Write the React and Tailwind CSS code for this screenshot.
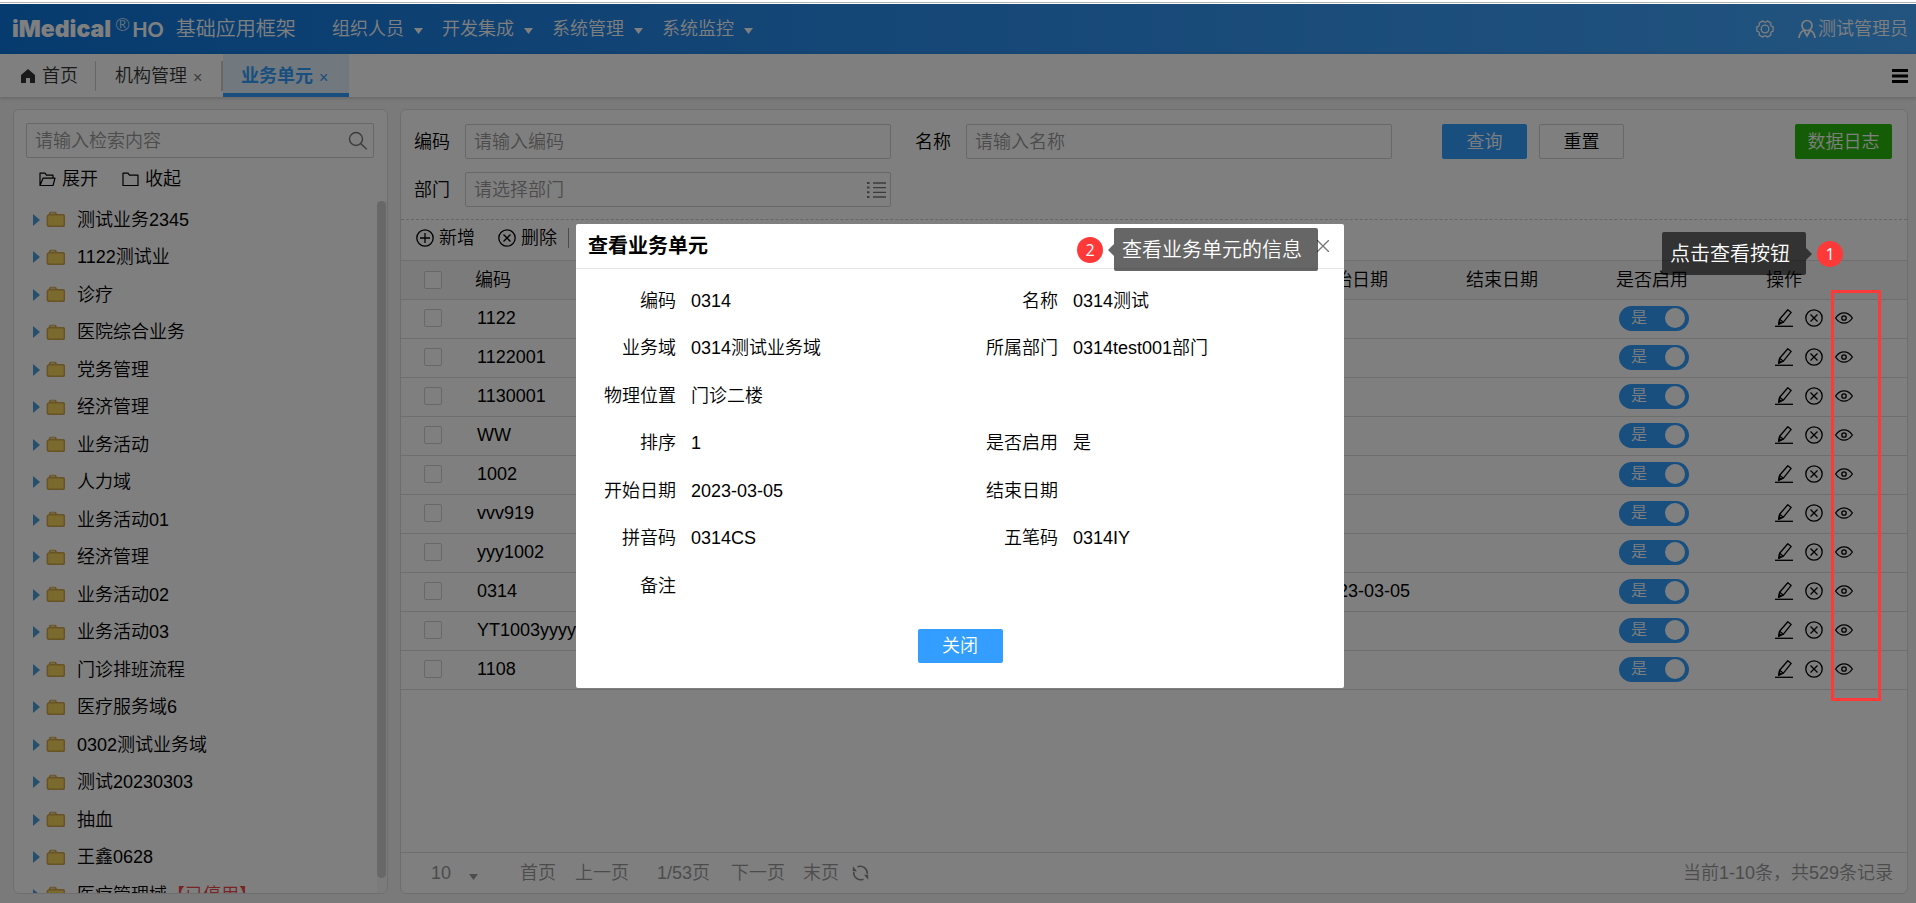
import React from "react";

const font = "font-['Liberation_Sans','Noto_Sans_CJK_SC',sans-serif]";

const navItems = ["组织人员", "开发集成", "系统管理", "系统监控"];

const treeItems = [
  "测试业务2345", "1122测试业", "诊疗", "医院综合业务", "党务管理", "经济管理", "业务活动",
  "人力域", "业务活动01", "经济管理", "业务活动02", "业务活动03", "门诊排班流程", "医疗服务域6",
  "0302测试业务域", "测试20230303", "抽血", "王鑫0628", "医疗管理域",
];

const rows = [
  ["1122", ""], ["1122001", ""], ["1130001", ""], ["WW", ""], ["1002", ""], ["vvv919", ""],
  ["yyy1002", ""], ["0314", "2023-03-05"], ["YT1003yyyyyy", ""], ["1108", ""],
];

const details = [
  ["编码", "0314", "名称", "0314测试"],
  ["业务域", "0314测试业务域", "所属部门", "0314test001部门"],
  ["物理位置", "门诊二楼", "", ""],
  ["排序", "1", "是否启用", "是"],
  ["开始日期", "2023-03-05", "结束日期", ""],
  ["拼音码", "0314CS", "五笔码", "0314IY"],
  ["备注", "", "", ""],
];

const gearPoints = [0, 60, 120, 180, 240, 300]
  .flatMap((a) => [[a - 14, 8.4], [a + 14, 8.4], [a + 23, 7], [a + 37, 7]])
  .map(([a, r]) => {
    const t = (a * Math.PI) / 180;
    return `${(9 + r * Math.cos(t)).toFixed(2)},${(9 + r * Math.sin(t)).toFixed(2)}`;
  })
  .join(" ");

function Caret({ className }) {
  return (
    <svg viewBox="0 0 9 6" className={className} fill="currentColor" aria-hidden="true">
      <path d="M0 0h9L4.5 6z" />
    </svg>
  );
}

function CircleIcon({ cross }) {
  return (
    <svg viewBox="0 0 18 18" className="size-[18px] shrink-0" fill="none" stroke="currentColor" strokeWidth="1.3" aria-hidden="true">
      <circle cx="9" cy="9" r="8.2" />
      {cross ? <path d="M5.5 5.5l7 7M12.5 5.5l-7 7" /> : <path d="M9 4v10M4 9h10" />}
    </svg>
  );
}

function EditIcon() {
  return (
    <svg viewBox="0 0 18 18" className="size-[18px]" fill="none" stroke="currentColor" strokeWidth="1.3" aria-hidden="true">
      <path d="M0 17.3h18" />
      <path d="M12.8.8l3.4 2.6-7.8 9.8-4.6 2 .8-5z" strokeLinejoin="round" />
      <path d="M4.6 10.2l3.8 3M3.8 15.200l.4-2.600 1.800 1.500z" />
    </svg>
  );
}

function EyeIcon() {
  return (
    <svg viewBox="0 0 18 18" className="size-[18px]" fill="none" stroke="currentColor" strokeWidth="1.3" aria-hidden="true">
      <path d="M.6 9C3 5.500 5.800 3.800 9 3.800s6 1.700 8.400 5.200C15 12.500 12.200 14.200 9 14.200S3 12.500.6 9z" />
      <circle cx="9" cy="9" r="2.200" />
    </svg>
  );
}

function TreeFolder() {
  return (
    <svg viewBox="0 0 20 17" className="h-[17px] w-5 shrink-0" aria-hidden="true">
      <path d="M3 2.200Q3.300.8 4.800.8h4q1.200 0 1.700 1L11 3h6.200q1.800 0 1.800 1.800v9.400q0 1.900-1.900 1.900H2.700Q.6 16.100.6 14V5.200Q.6 3.500 2.400 3.400z" fill="#cfa64a" />
      <path d="M3.400 4.600h13q1.200 0 1.200 1.200v7.400q0 1.200-1.200 1.200h-13q-1.300 0-1.300-1.300V5.900q0-1.300 1.300-1.300z" fill="#f6d45c" />
      <path d="M4.500 2.200h4.300" stroke="#ffeeb0" />
    </svg>
  );
}

function OutlineFolder({ open }) {
  return (
    <svg viewBox="0 0 17 15" className="h-[15px] w-[17px]" fill="none" stroke="currentColor" strokeWidth="1.200" strokeLinejoin="round" aria-hidden="true">
      {open ? (
        <path d="M1 13.500V1.200h5l1.500 2H14v3M1 13.500L4 6.200h12l-2 7.300z" />
      ) : (
        <path d="M1 13.500V1.200h5l1.500 2H16v10.300z" />
      )}
    </svg>
  );
}

function Header() {
  return (
    <header className="flex h-[50px] shrink-0 items-center bg-linear-to-r from-[#0d77de] to-[#45a8ff] text-white">
      <div className="flex w-[320px] shrink-0 items-center pl-3">
        <span className="font-['Inter',sans-serif] text-[23px] leading-none font-black">iMedical</span>
        <span className="ml-1 self-start font-['Lato',sans-serif] text-lg leading-none">®</span>
        <span className="ml-0.5 font-['Lato',sans-serif] text-xl leading-none font-bold">HO</span>
        <span className="ml-3 text-xl">基础应用框架</span>
      </div>
      <nav className="flex pl-3">
        {navItems.map((n) => (
          <a key={n} href="#" className="flex w-[110px] items-center gap-2.5 text-lg whitespace-nowrap">
            {n}
            <Caret className="mt-1 h-1.5 w-[9px]" />
          </a>
        ))}
      </nav>
      <div className="ml-auto flex items-center pr-2">
        <button aria-label="设置" className="mr-6">
          <svg viewBox="0 0 18 18" className="size-[18px]" fill="none" stroke="currentColor" strokeWidth="1.300" strokeLinejoin="round">
            <polygon points={gearPoints} />
            <circle cx="9" cy="9" r="3.800" />
          </svg>
        </button>
        <button className="flex items-center gap-0.5 text-lg">
          <svg viewBox="0 0 18 20" className="h-5 w-[18px]" fill="none" stroke="currentColor" strokeWidth="1.700" aria-hidden="true">
            <circle cx="9" cy="6.500" r="5" />
            <path d="M1 19c.3-4 2-6.500 5-7.800M17 19c-.3-4-2-6.500-5-7.800M6 11.500L9 17l3-5.500" />
          </svg>
          测试管理员
        </button>
      </div>
    </header>
  );
}

function TabBar() {
  return (
    <div className="z-10 flex h-[43px] shrink-0 bg-white text-lg text-[#333] shadow-[0_1px_4px_rgba(0,0,0,0.2)]">
      <div className="flex items-center">
        <a href="#" className="flex h-[30px] w-24 items-center gap-1.5 border-r border-[#ccc] pl-5">
          <svg viewBox="0 0 16 14" className="h-3.5 w-4" fill="#333" aria-hidden="true">
            <path d="M8 0l7 6v8h-5V9H6v5H1V6z" />
          </svg>
          首页
        </a>
        <a href="#" className="flex h-[30px] w-[127px] items-center gap-1.5 border-r-2 border-[#ccc] pl-[19px] whitespace-nowrap">
          机构管理 <span className="pt-1 text-base text-[#777]">×</span>
        </a>
      </div>
      <a href="#" className="flex w-[126px] items-center gap-1.5 bg-[#e3f1fc] pl-[18px] font-bold whitespace-nowrap text-[#339eff] shadow-[inset_0_-4px_0_#339eff]">
        业务单元 <span className="pt-1 text-base font-normal">×</span>
      </a>
      <button aria-label="菜单" className="mr-2 ml-auto text-black">
        <svg viewBox="0 0 16 14" className="h-3.5 w-4" stroke="currentColor" strokeWidth="3" aria-hidden="true">
          <path d="M0 1.500h16M0 7h16M0 12.500h16" />
        </svg>
      </button>
    </div>
  );
}

function Sidebar() {
  return (
    <aside className="flex w-[375px] shrink-0 flex-col overflow-hidden rounded-md border border-[#ddd] bg-white">
      <div className="mr-[13px] ml-3 mt-[13px] flex h-[35px] shrink-0 items-center rounded-xs border border-[#d0d0d0] pr-[5px] pl-2">
        <input aria-label="检索" placeholder="请输入检索内容" className="min-w-0 flex-1 text-lg outline-none placeholder:text-[#999]" />
        <svg viewBox="0 0 20 20" className="size-5" fill="none" stroke="#777" strokeWidth="1.400" aria-hidden="true">
          <circle cx="8" cy="8" r="6.500" />
          <path d="M12.800 12.800l6 5.500" />
        </svg>
      </div>
      <div className="mt-1.5 flex h-[30px] shrink-0 items-center gap-6 pl-[25px] text-lg">
        <button className="flex items-center gap-1.5"><OutlineFolder open />展开</button>
        <button className="flex items-center gap-1.5"><OutlineFolder />收起</button>
      </div>
      <div className="mt-[7px] flex min-h-0 flex-1 overflow-hidden">
        <ul className="min-w-0 flex-1 pl-[19px] text-lg">
          {treeItems.map((t, i) => (
            <li key={i} className="flex items-center odd:h-[37px] even:h-[38px]">
              <svg viewBox="0 0 7 12" className="mr-1.5 h-3 w-[7px]" fill="#4a9fd8" aria-hidden="true"><path d="M0 0l7 6-7 6z" /></svg>
              <TreeFolder />
              <span className="ml-[11px] whitespace-nowrap">
                {t}
                {i === treeItems.length - 1 && <span className="text-[#f04848]">【已停用】</span>}
              </span>
            </li>
          ))}
        </ul>
        <div className="w-[10px] bg-[#f6f6f6]">
          <div className="mb-4 h-[677px] w-[9px] rounded-full bg-[#d0d0d0]" />
        </div>
      </div>
    </aside>
  );
}

function Field({ id, label, placeholder, list }) {
  return (
    <div className="flex items-center gap-[15px]">
      <label htmlFor={id} className="text-lg whitespace-nowrap">{label}</label>
      <div className="flex h-[35px] w-[426px] items-center rounded-xs border border-[#d0d0d0] pr-1 pl-2">
        <input id={id} placeholder={placeholder} className="min-w-0 flex-1 text-lg outline-none placeholder:text-[#999]" />
        {list && (
          <svg viewBox="0 0 19 16" className="h-4 w-[19px]" stroke="#777" strokeWidth="1.300" aria-hidden="true">
            <path d="M6 1h13M6 5.600h13M6 10.300h13M6 15h13" />
            <path d="M0 1h2.500M0 5.600h2.500M0 10.300h2.500M0 15h2.500" strokeWidth="2" />
          </svg>
        )}
      </div>
    </div>
  );
}

function UnitTable() {
  return (
    <table className="w-full table-fixed border-collapse text-lg">
      <colgroup>
        <col className="w-[65px]" />
        <col className="w-[150px]" />
        <col />
        <col className="w-[150px]" />
        <col className="w-[150px]" />
        <col className="w-[150px]" />
        <col className="w-[150px]" />
      </colgroup>
      <thead>
        <tr className="h-[39px] border-y border-[#ddd] bg-[#f6f6f6] text-left *:font-[350]">
          <th className="pl-[23px]"><input type="checkbox" aria-label="全选" className="block size-[18px] appearance-none rounded-xs border border-[#d0d0d0] bg-white" /></th>
          <th className="pl-[9px]">编码</th>
          <th></th>
          <th className="pl-[9px]">开始日期</th>
          <th className="pl-[9px]">结束日期</th>
          <th className="pl-[9px]">是否启用</th>
          <th className="pl-[9px]">操作</th>
        </tr>
      </thead>
      <tbody>
        {rows.map(([code, start]) => (
          <tr key={code} className="h-[39px] border-b border-[#ddd] *:pb-0.5">
            <td className="pl-[23px]"><input type="checkbox" aria-label={code} className="block size-[18px] appearance-none rounded-xs border border-[#d0d0d0] bg-white" /></td>
            <td className="pl-[11px]">{code}</td>
            <td></td>
            <td className="pl-[11px]">{start}</td>
            <td></td>
            <td className="pl-3">
              <button role="switch" aria-checked="true" className="flex h-[25px] w-[70px] items-center justify-between rounded-full bg-[#339eff] pr-1 pl-3 text-base leading-none text-white">
                是
                <span className="size-5 rounded-full bg-white" />
              </button>
            </td>
            <td className="pl-[18px]">
              <div className="flex items-center gap-3">
                <button aria-label="编辑"><EditIcon /></button>
                <button aria-label="删除"><CircleIcon cross /></button>
                <button aria-label="查看"><EyeIcon /></button>
              </div>
            </td>
          </tr>
        ))}
      </tbody>
    </table>
  );
}

function Pager() {
  return (
    <div className="mt-auto flex h-[41px] items-center border-t border-[#ddd] px-3.5 text-lg whitespace-nowrap text-[#999]">
      <button className="flex w-[105px] items-center gap-[18px] pl-4">10 <Caret className="mt-2 h-1.5 w-[9px]" /></button>
      <button className="w-[55px] text-left">首页</button>
      <button className="w-[82px] text-left">上一页</button>
      <span className="w-[74px]">1/53页</span>
      <button className="w-[72px] text-left">下一页</button>
      <button className="w-[49px] text-left">末页</button>
      <button aria-label="刷新">
        <svg viewBox="0 0 17 16" className="h-4 w-[17px]" fill="none" stroke="#888" strokeWidth="1.500" aria-hidden="true">
          <path d="M5.500 1.800A7 7 0 0 1 15.200 9M11.500 14.200A7 7 0 0 1 1.800 7" />
          <path d="M.8 1.200v5h4.200zM16.200 14.800v-5h-4.200z" fill="#888" stroke="none" />
        </svg>
      </button>
      <span className="ml-auto">当前1-10条，共529条记录</span>
    </div>
  );
}

function Dialog() {
  return (
    <section role="dialog" aria-label="查看业务单元" className="relative mt-[220px] ml-1 h-fit w-[768px] rounded-xs bg-white text-lg text-black">
      <div className="flex h-[45px] items-center justify-between border-b border-[#e5e5e5] pr-[15px] pl-3">
        <h2 className="text-xl font-bold">查看业务单元</h2>
        <button aria-label="关闭窗口">
          <svg viewBox="0 0 12 12" className="size-3" stroke="#777" strokeWidth="1.300"><path d="M0 0l12 12M12 0L0 12" /></svg>
        </button>
      </div>
      <dl className="pt-2">
        {details.map(([a, b, c, d]) => (
          <div key={a} className="grid grid-cols-[100px_282px_100px_1fr] items-center odd:h-[47px] even:h-[48px]">
            <dt className="text-right">{a}</dt>
            <dd className="pl-[15px]">{b}</dd>
            <dt className="text-right">{c}</dt>
            <dd className="pl-[15px]">{d}</dd>
          </div>
        ))}
      </dl>
      <div className="flex justify-center pt-5 pb-[25px]">
        <button className="h-[34px] w-[85px] rounded-xs bg-[#339eff] text-white">关闭</button>
      </div>
      <div className="absolute top-1 right-[26px] flex items-center">
        <Badge n="2" />
        <div className="ml-[5px] border-y-[6px] border-r-[6px] border-y-transparent border-r-black/60" />
        <div className="flex h-[43px] w-[204px] items-center rounded-xs bg-black/60 pl-2 text-xl whitespace-nowrap text-white">查看业务单元的信息</div>
      </div>
    </section>
  );
}

function Badge({ n }) {
  return (
    <span className="flex size-[26px] items-center justify-center rounded-full bg-[#ff3838] font-['Open_Sans',sans-serif] text-base leading-none font-normal text-white">{n}</span>
  );
}

export default function App() {
  return (
    <div className={`flex h-screen flex-col overflow-hidden bg-white font-[350] text-black ${font}`}>
      <div className="h-1 shrink-0 py-0.5"><div className="h-px bg-[#b0b0b0]" /></div>
      <div className="relative flex min-h-0 flex-1 flex-col bg-[#f5f5f5]">
        <Header />
        <TabBar />
        <main className="flex min-h-0 flex-1 gap-3 pt-3 pr-2 pb-[9px] pl-[13px]">
          <Sidebar />
          <section className="flex min-w-0 flex-1 flex-col rounded-md border border-[#ddd] bg-white">
            <div className="flex flex-col gap-[13px] border-b border-dashed border-[#ccc] pt-3.5 pr-[15px] pb-3 pl-[13px]">
              <div className="flex items-center text-lg">
                <Field id="code" label="编码" placeholder="请输入编码" />
                <div className="ml-6"><Field id="name" label="名称" placeholder="请输入名称" /></div>
                <button className="ml-[50px] h-[35px] w-[85px] rounded-xs bg-[#339eff] text-white">查询</button>
                <button className="ml-3 h-[35px] w-[85px] rounded-xs border border-[#d0d0d0]">重置</button>
                <button className="ml-auto h-[35px] w-[97px] rounded-xs bg-[#28b80a] text-white">数据日志</button>
              </div>
              <Field id="dept" label="部门" placeholder="请选择部门" list />
            </div>
            <div className="flex h-10 shrink-0 items-center pb-1 pl-[15px] text-lg">
              <button className="flex w-[82px] items-center gap-[5px]"><CircleIcon />新增</button>
              <button className="flex items-center gap-[5px]"><CircleIcon cross />删除</button>
              <span className="ml-[11px] h-5 w-px bg-[#999]" />
            </div>
            <UnitTable />
            <Pager />
          </section>
        </main>

        <div className="absolute inset-0 z-20 flex justify-center bg-black/50">
          <Dialog />
        </div>
        <div className="absolute top-[228px] right-[73px] z-30 flex items-center">
          <div className="flex h-[43px] w-36 items-center rounded-xs bg-black/60 pl-2 text-xl whitespace-nowrap text-white">点击查看按钮</div>
          <div className="mr-[5px] border-y-[6px] border-l-[6px] border-y-transparent border-l-black/60" />
          <Badge n="1" />
        </div>
        <div className="absolute top-[286px] right-[35px] z-30 h-[411px] w-[50px] border-3 border-[#ff3838]" />
      </div>
    </div>
  );
}
